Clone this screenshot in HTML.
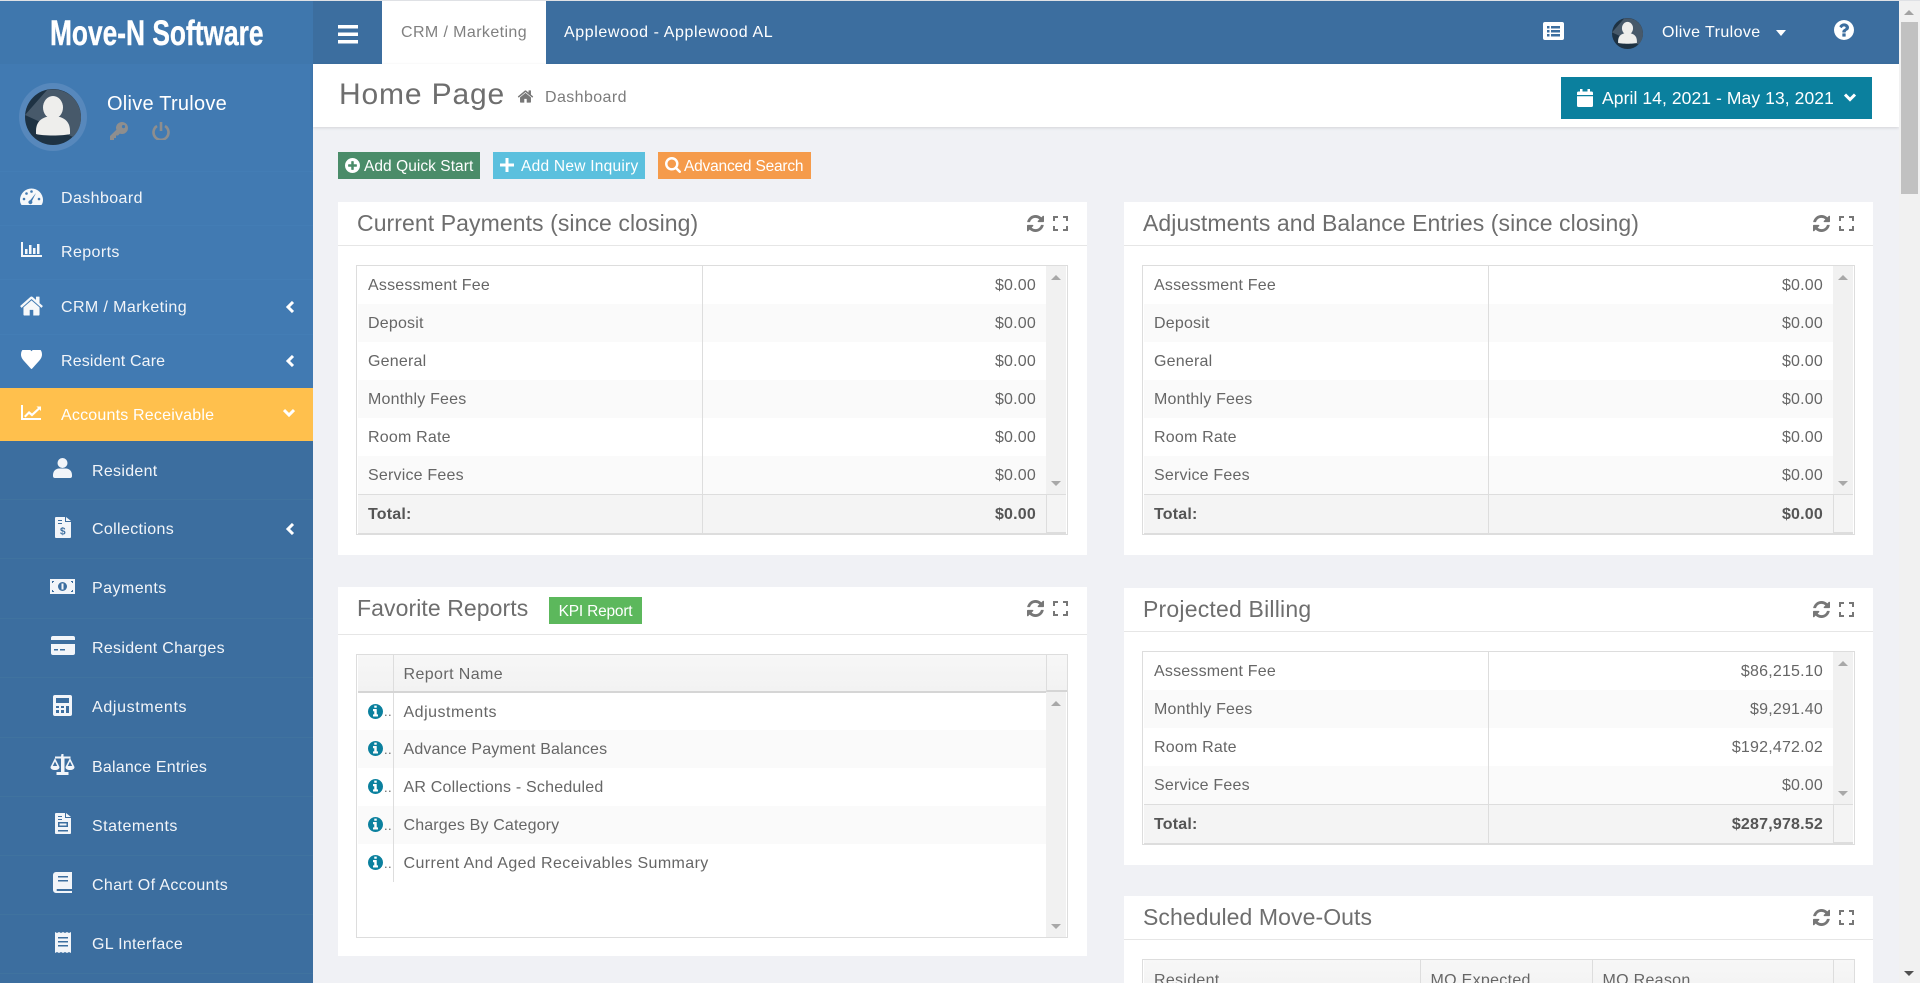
<!DOCTYPE html>
<html lang="en"><head><meta charset="utf-8"><title>Home Page</title>
<style>
*{box-sizing:border-box}
html,body{margin:0;padding:0;width:1920px;height:983px;overflow:hidden;background:#f0f1f5;font-family:"Liberation Sans",Arial,sans-serif;font-size:16px;color:#666}
#root{position:absolute;left:0;top:0;width:1920px;height:983px;overflow:hidden}
svg{display:block;position:absolute;fill:currentColor}
.a{position:absolute;white-space:nowrap}
#strip{position:absolute;left:0;top:0;width:1920px;height:1px;background:#dfe1e5;z-index:5}
#side{position:absolute;left:0;top:0;width:313px;height:983px;background:#417ab2;color:#f2f5f9;overflow:hidden}
#logo{position:absolute;left:0;top:0;width:313px;height:64px;background:#3f77ad}
#logo span{position:absolute;left:50px;top:14px;font-weight:700;font-size:35px;line-height:40px;color:#fff;transform-origin:0 50%;transform:scaleX(.752);white-space:nowrap;-webkit-text-stroke:.4px #fff}
#side ul{list-style:none;margin:0;padding:0;position:absolute;left:0;top:171px;width:313px}
#side li{position:relative;white-space:nowrap;border-top:1px solid #437db5;padding-left:61px}
#side li.s{background:#3c6e9f;border-top:1px solid #40739f;padding-left:92px}
#side li.act{background:#ffc04d;border-top:0;color:#fff}
.chev{left:285px;width:10px;height:12px;fill:none;stroke:#fff;stroke-width:3}
#top{position:absolute;left:313px;top:0;width:1586px;height:64px;background:#3c6e9f;color:#fff}
#band{position:absolute;left:313px;top:64px;width:1586px;height:63px;background:#fff;box-shadow:0 1px 3px rgba(0,0,0,.12)}
#sb{position:absolute;left:1899px;top:0;width:21px;height:983px;background:#f1f1f1}
.btn{position:absolute;top:152px;height:27px;color:#fff;font-size:15.5px;line-height:29px;white-space:nowrap}
.panel{position:absolute;background:#fff;overflow:hidden}
.panel h3{position:absolute;left:19px;margin:0;font-weight:400;font-size:23px;line-height:30px;letter-spacing:.08px;color:#6e6e6e;white-space:nowrap}
.hr{position:absolute;left:0;right:0;height:1px;background:#e6e6e6}
.ic{color:#777}
.tw{position:absolute;border:1px solid #ddd;background:#fff;overflow:hidden}
.tw table{position:absolute;left:1px;top:0;width:688px;border-collapse:collapse;table-layout:fixed;letter-spacing:.2px}
.tw td,.tw th{height:38px;padding:2px 10px 0;font-weight:400;white-space:nowrap;overflow:hidden}
.tw td.r{text-align:right}
.tw tr:nth-child(even) td{background:#fafafa}
.tw td.c1{border-right:1px solid #ddd}
.tw tr.f td{height:40px;background:#f4f4f4!important;font-weight:700;border-top:1px solid #ddd;border-bottom:2px solid #ddd;color:#555}
.tw table.fav tr:nth-child(even) td{background:#fff}
.tw table.fav tr:nth-child(odd):not(.hd) td{background:#fafafa}
.sc{position:absolute;left:689px;width:20px;background:#f1f1f1}
.sc:before,.sc:after{content:"";position:absolute;left:5px;border-left:5px solid transparent;border-right:5px solid transparent}
.sc:before{top:9px;border-bottom:5px solid #a8a8a8}
.sc:after{bottom:8px;border-top:5px solid #a8a8a8}
.fs{position:absolute;left:689px;width:20px;background:#f4f4f4;border-left:1px solid #ddd;border-top:1px solid #ddd;border-bottom:2px solid #ddd}
.hd td,.hd th{background:linear-gradient(#f7f7f7,#f2f2f2);padding-top:3px}
</style></head><body>
<div id="root">
<svg width="0" height="0" style="position:absolute"><defs>
<symbol id="home" viewBox="0 0 1792 1792"><path d="M1472 992v480q0 26-19 45t-45 19h-384v-384h-256v384h-384q-26 0-45-19t-19-45v-480q0-1 .5-3t.5-3l575-474 575 474q1 2 1 6zm223-69l-62 74q-8 9-21 11h-3q-13 0-21-7l-692-577-692 577q-12 8-24 7-13-2-21-11l-62-74q-8-10-7-23.5t11-21.5l719-599q32-26 76-26t76 26l244 204v-195q0-14 9-23t23-9h192q14 0 23 9t9 23v408l219 182q10 8 11 21.5t-7 23.5z"/></symbol>
<symbol id="refresh" viewBox="128 128 1536 1536"><path d="M1639 1056q0 5-1 7-64 268-268 434.5t-478 166.5q-146 0-282.5-55t-243.5-157l-129 129q-19 19-45 19t-45-19-19-45v-448q0-26 19-45t45-19h448q26 0 45 19t19 45-19 45l-137 137q71 66 161 102t187 36q134 0 250-65t186-179q11-17 53-117 8-23 30-23h192q13 0 22.5 9.5t9.5 22.5zm25-800v448q0 26-19 45t-45 19h-448q-26 0-45-19t-19-45 19-45l138-138q-148-137-349-137-134 0-250 65t-186 179q-11 17-53 117-8 23-30 23h-199q-13 0-22.5-9.5t-9.5-22.5v-7q65-268 270-434.5t480-166.5q146 0 284 55.5t245 156.5l130-129q19-19 45-19t45 19 19 45z"/></symbol>
<symbol id="expand" viewBox="0 0 15 15"><path d="M0 0h5v2H2v3H0zM10 0h5v5h-2V2h-3zM0 10h2v3h3v2H0zM13 10h2v5h-5v-2h3z"/></symbol>
<symbol id="info" viewBox="128 128 1536 1536"><path d="M1152 1376v-160q0-14-9-23t-23-9h-96v-512q0-14-9-23t-23-9h-320q-14 0-23 9t-9 23v160q0 14 9 23t23 9h96v320h-96q-14 0-23 9t-9 23v160q0 14 9 23t23 9h448q14 0 23-9t9-23zm-128-896v-160q0-14-9-23t-23-9h-192q-14 0-23 9t-9 23v160q0 14 9 23t23 9h192q14 0 23-9t9-23zm640 416q0 209-103 385.5t-279.5 279.5-385.5 103-385.5-103-279.5-279.5-103-385.5 103-385.5 279.5-279.5 385.5-103 385.5 103 279.5 279.5 103 385.5z"/></symbol>
<symbol id="avatar" viewBox="0 0 56 56"><circle cx="28" cy="28" r="28" fill="#1e3243"/><path d="M0 26 L22 1 A28 28 0 0 1 56 28 A28 28 0 0 1 48 48z" fill="#47596a"/><path d="M11 42c0-8 4-12 10-14h14c6 2 10 6 10 14v3c-6 2-28 2-34 0z" fill="#eeeeec"/><ellipse cx="28" cy="18.5" rx="10" ry="11.5" fill="#eeeeec"/></symbol>
</defs></svg>

<div id="strip"></div>

<aside id="side">
<div id="logo"><span>Move-N Software</span></div>
<svg style="left:19px;top:83px;width:68px;height:68px" viewBox="0 0 68 68"><circle cx="34" cy="34" r="34" fill="#5788bc"/></svg>
<svg style="left:25px;top:89px;width:56px;height:56px"><use href="#avatar"/></svg>
<div class="a" style="left:107px;top:92px;font-size:20px;line-height:24px;letter-spacing:.25px;color:#fff">Olive Trulove</div>
<svg style="left:110px;top:122px;width:18px;height:18px;color:#8e8e8e" viewBox="0 0 18 18"><path d="M12 0a6 6 0 0 1 0 12c-.8 0-1.500-.2-2.200-.4L8 13.500H6V16H4v2H0v-4l6.400-6.200C6.200 7.200 6 6.600 6 6a6 6 0 0 1 6-6zm1.500 3a1.600 1.600 0 1 0 0 3.200 1.600 1.600 0 0 0 0-3.200z" fill-rule="evenodd"/></svg>
<svg style="left:152px;top:122px;width:18px;height:18px;color:#8e8e8e;fill:none;stroke:currentColor;stroke-width:2.600" viewBox="0 0 18 18"><path d="M5 4a7.500 7.500 0 1 0 8 0M9 0v9"/></svg>
<ul>
<li style="height:54px;line-height:54px;letter-spacing:.4px"><svg style="left:20px;top:16px;width:23px;height:17px;color:#f6f8fa" viewBox="0 0 23 17"><path d="M0 12A11.500 11.500 0 0 1 23 12c0 2-.5 3.500-1.500 5h-20C.5 15.500 0 14 0 12z"/><g fill="#417ab2"><circle cx="4" cy="11" r="1.300"/><circle cx="6.500" cy="5.500" r="1.300"/><circle cx="11.500" cy="3.500" r="1.300"/><circle cx="19" cy="11" r="1.300"/><path d="M16 5l-4 8a2 2 0 1 1-1.800-.8z"/></g></svg>Dashboard</li>
<li style="height:54px;line-height:54px;letter-spacing:.4px"><svg style="left:21px;top:16px;width:21px;height:15px;color:#f6f8fa" viewBox="0 0 21 15"><path d="M0 0h2v13h19v2H0zM4 7h2.500v5H4zM8 3h2.500v9H8zM12 6h2.500v6H12zM16 2h2.500v10H16z"/></svg>Reports</li>
<li style="height:55px;line-height:55px;letter-spacing:.4px"><svg style="left:19px;top:15px;width:25px;height:21px;color:#f6f8fa" viewBox="0 150 1792 1420" preserveAspectRatio="none"><use href="#home" width="1792" height="1792"/></svg>CRM / Marketing<svg class="chev" style="top:21px" viewBox="0 0 10 12"><path d="M8 1L3 6l5 5"/></svg></li>
<li style="height:54px;line-height:54px;letter-spacing:.15px"><svg style="left:21px;top:15px;width:21px;height:19px;color:#fff" viewBox="0 256 1792 1408" preserveAspectRatio="none"><path d="M896 1664q-26 0-44-18l-624-602q-10-8-27.500-26t-55.500-65.500-68-97.500-53.500-121-23.500-138q0-220 127-344t351-124q62 0 126.500 21.500t120 58 95.500 68.500 76 68q36-36 76-68t95.500-68.500 120-58 126.500-21.500q224 0 351 124t127 344q0 221-229 450l-623 600q-18 18-44 18z"/></svg>Resident Care<svg class="chev" style="top:20px" viewBox="0 0 10 12"><path d="M8 1L3 6l5 5"/></svg></li>
<li class="act" style="height:53px;line-height:55px;letter-spacing:.2px"><svg style="left:21px;top:17px;width:20px;height:15px;color:#fff" viewBox="0 0 20 15"><path d="M0 0h2v13h18v2H0z"/><path d="M3 11l5-5 3 2.500L17 3l-1.500-1.500H20V6l-1.500-1.500L11 11.500 8 9l-3.500 3.500z"/></svg>Accounts Receivable<svg class="chev" style="top:20px;left:283px;width:12px;height:10px" viewBox="0 0 12 10"><path d="M1 2l5 5 5-5"/></svg></li>
<li class="s" style="height:58px;line-height:61px;letter-spacing:.3px;border-top:0"><svg style="left:53px;top:17px;width:19px;height:20px" viewBox="0 0 19 20"><circle cx="9.500" cy="5" r="5"/><path d="M0 17c0-4 3-6.500 6-6.500h7c3 0 6 2.500 6 6.500v1a2 2 0 0 1-2 2H2a2 2 0 0 1-2-2z"/></svg>Resident</li>
<li class="s" style="height:59px;line-height:60px;letter-spacing:.35px"><svg style="left:55px;top:17px;width:16px;height:21px" viewBox="0 0 16 21"><path d="M1 0h9v5h6v15a1 1 0 0 1-1 1H1a1 1 0 0 1-1-1V1a1 1 0 0 1 1-1zM11 0l5 4h-5z"/><path d="M3 3h4v1H3zM3 6h4v1H3z" fill="#3c6e9f"/><text x="8" y="17.500" font-size="10" font-weight="700" text-anchor="middle" fill="#3c6e9f">$</text></svg>Collections<svg class="chev" style="top:23px" viewBox="0 0 10 12"><path d="M8 1L3 6l5 5"/></svg></li>
<li class="s" style="height:60px;line-height:60px;letter-spacing:.45px"><svg style="left:50px;top:20px;width:25px;height:15px" viewBox="0 0 25 15"><path d="M0 0h25v15H0z"/><circle cx="12.500" cy="7.500" r="4.500" fill="#3c6e9f"/><path d="M11.500 4.500h2v6h-2z" fill="#f4f6f9"/><path d="M2 2h2v1H3v1H2zM21 2h2v2h-1V3h-1zM2 11h1v1h1v1H2zM22 11h1v2h-2v-1h1z" fill="#3c6e9f"/></svg>Payments</li>
<li class="s" style="height:59px;line-height:59px;letter-spacing:.3px"><svg style="left:51px;top:17px;width:24px;height:19px" viewBox="0 0 24 19"><path d="M2 0h20a2 2 0 0 1 2 2v2H0V2a2 2 0 0 1 2-2zM0 8h24v9a2 2 0 0 1-2 2H2a2 2 0 0 1-2-2z"/><path d="M3 13h4v1.500H3zM9 13h5v1.500H9z" fill="#3c6e9f"/></svg>Resident Charges</li>
<li class="s" style="height:60px;line-height:60px;letter-spacing:.65px"><svg style="left:53px;top:17px;width:19px;height:21px" viewBox="0 0 19 21"><path d="M2 0h15a2 2 0 0 1 2 2v17a2 2 0 0 1-2 2H2a2 2 0 0 1-2-2V2a2 2 0 0 1 2-2z"/><path d="M3 3h13v5H3zM3 11h3v2H3zM8 11h3v2H8zM13 11h3v7h-3zM3 15h3v3H3zM8 15h3v3H8z" fill="#3c6e9f"/></svg>Adjustments</li>
<li class="s" style="height:59px;line-height:59px;letter-spacing:.2px"><svg style="left:50px;top:16px;width:25px;height:21px" viewBox="0 0 25 21"><path d="M11.500 0h2v2.500h7v2h-6V18h4v3H6.500v-3h4.500V4.500h-6v-2h6z"/><path d="M5 4l4.500 9c0 2-2 3-4.500 3s-4.500-1-4.500-3zm0 3.500L2.800 12h4.400zM20 4l4.500 9c0 2-2 3-4.500 3s-4.500-1-4.500-3zm0 3.500L17.800 12h4.400z" fill-rule="evenodd"/></svg>Balance Entries</li>
<li class="s" style="height:59px;line-height:60px;letter-spacing:.5px"><svg style="left:55px;top:16px;width:16px;height:21px" viewBox="0 0 16 21"><path d="M1 0h9v5h6v15a1 1 0 0 1-1 1H1a1 1 0 0 1-1-1V1a1 1 0 0 1 1-1zM11 0l5 4h-5z"/><path d="M3 3h4v1H3zM3 6h4v1H3zM3 9h10v5H3zM3 17h10v1.500H3z" fill="#3c6e9f"/><path d="M4.500 10.500h7v2h-7z"/></svg>Statements</li>
<li class="s" style="height:59px;line-height:60px;letter-spacing:.37px"><svg style="left:53px;top:16px;width:19px;height:21px" viewBox="0 0 19 21"><path d="M3 0h16v17H4a1.500 1.500 0 0 0 0 2h15v2H3a3 3 0 0 1-3-3V3a3 3 0 0 1 3-3z"/><path d="M5 4h10v1.500H5zM5 8h10v1.500H5z" fill="#3c6e9f"/></svg>Chart Of Accounts</li>
<li class="s" style="height:59px;line-height:60px;letter-spacing:.3px"><svg style="left:55px;top:17px;width:16px;height:21px" viewBox="0 0 16 21"><path d="M0 0l2 1 2-1 2 1 2-1 2 1 2-1 2 1 2-1v21l-2-1-2 1-2-1-2 1-2-1-2 1-2-1-2 1z"/><path d="M3 5h10v1.500H3zM3 9h10v1.500H3zM3 13h10v1.500H3z" fill="#3c6e9f"/></svg>GL Interface</li>
<li class="s" style="height:30px"></li>
</ul>
</aside>

<header id="top">
<svg style="left:25px;top:25px;width:20px;height:19px;color:#fff" viewBox="0 0 20 19"><path d="M0 0h20v3.500H0zM0 7.500h20V11H0zM0 15h20v3.500H0z"/></svg>
<div class="a" style="left:69px;top:1px;width:164px;height:63px;background:#fff;color:#808080;line-height:64px;padding-left:19px;letter-spacing:.4px">CRM / Marketing</div>
<div class="a" style="left:251px;top:1px;line-height:64px;letter-spacing:.6px">Applewood - Applewood AL</div>
<svg style="left:1230px;top:22px;width:21px;height:18px;color:#fff" viewBox="0 0 21 18"><path d="M2 0h17a2 2 0 0 1 2 2v14a2 2 0 0 1-2 2H2a2 2 0 0 1-2-2V2a2 2 0 0 1 2-2z"/><path d="M4 4h2.500v2.500H4zM8 4h9v2.500H8zM4 8h2.500v2.500H4zM8 8h9v2.500H8zM4 12h2.500v2.500H4zM8 12h9v2.500H8z" fill="#3c6e9f"/></svg>
<svg style="left:1299px;top:18px;width:31px;height:31px"><use href="#avatar"/></svg>
<div class="a" style="left:1349px;top:1px;line-height:64px;letter-spacing:.4px">Olive Trulove</div>
<svg style="left:1463px;top:30px;width:10px;height:6px;color:#fff" viewBox="0 0 10 6"><path d="M0 0h10L5 6z"/></svg>
<svg style="left:1521px;top:20px;width:20px;height:20px;color:#fff" viewBox="128 128 1536 1536"><path d="M1024 1376v-192q0-14-9-23t-23-9h-192q-14 0-23 9t-9 23v192q0 14 9 23t23 9h192q14 0 23-9t9-23zm256-672q0-88-55.500-163t-138.500-116-170-41q-243 0-371 213-15 24 8 42l132 100q7 6 19 6 16 0 25-12 53-68 86-92 34-24 86-24 48 0 85.500 26t37.500 59q0 38-20 61t-68 45q-63 28-115.500 86.500t-52.500 125.500v36q0 14 9 23t23 9h192q14 0 23-9t9-23q0-19 21.500-49.500t54.500-49.500q32-18 49-28.500t46-35 44.500-48 28-60.500 12.500-81zm384 192q0 209-103 385.500t-279.500 279.500-385.500 103-385.500-103-279.500-279.500-103-385.500 103-385.500 279.500-279.500 385.500-103 385.500 103 279.500 279.500 103 385.500z"/></svg>
</header>

<div id="band">
<div class="a" style="left:26px;top:12px;font-size:30px;line-height:38px;letter-spacing:.85px;color:#6e6e6e">Home Page</div>
<svg style="left:204px;top:24px;width:17px;height:17px;color:#777"><use href="#home"/></svg>
<div class="a" style="left:232px;top:22px;line-height:24px;letter-spacing:.4px;color:#7c7c7c">Dashboard</div>
<div class="a" style="left:1248px;top:13px;width:311px;height:42px;background:#0b809e"></div>
<svg style="left:1264px;top:25px;width:16px;height:18px;color:#fff" viewBox="0 0 16 18"><path d="M3 0h2.500v2.500h5V0H13v2.500h1.500A1.500 1.500 0 0 1 16 4v2H0V4a1.500 1.500 0 0 1 1.500-1.500H3zM0 7.200h16v9.300a1.500 1.500 0 0 1-1.500 1.500h-13A1.500 1.500 0 0 1 0 16.500z"/></svg>
<div class="a" style="left:1289px;top:13px;line-height:42px;font-size:17.5px;letter-spacing:.08px;color:#fff">April 14, 2021 - May 13, 2021</div>
<svg style="left:1531px;top:29px;width:12px;height:9px;fill:none;stroke:#fff;stroke-width:3" viewBox="0 0 12 9"><path d="M1 1.500l5 5 5-5"/></svg>
</div>

<div class="btn" style="left:338px;width:142px;background:#4a8c69;padding-left:26px;letter-spacing:.05px"><svg style="left:7px;top:6px;width:15px;height:15px;color:#fff" viewBox="128 128 1536 1536"><path d="M1344 960v-128q0-26-19-45t-45-19h-256v-256q0-26-19-45t-45-19h-128q-26 0-45 19t-19 45v256h-256q-26 0-45 19t-19 45v128q0 26 19 45t45 19h256v256q0 26 19 45t45 19h128q26 0 45-19t19-45v-256h256q26 0 45-19t19-45zm320-64q0 209-103 385.500t-279.500 279.500-385.500 103-385.500-103-279.500-279.500-103-385.500 103-385.500 279.500-279.500 385.500-103 385.500 103 279.500 279.500 103 385.500z"/></svg>Add Quick Start</div>
<div class="btn" style="left:493px;width:152px;background:#5bc0de;padding-left:28px;letter-spacing:.25px"><svg style="left:7px;top:6px;width:14px;height:14px;color:#fff" viewBox="0 0 14 14"><path d="M5.500 0h3v5.500H14v3H8.500V14h-3V8.500H0v-3h5.500z"/></svg>Add New Inquiry</div>
<div class="btn" style="left:658px;width:153px;background:#f59b4b;padding-left:26px;letter-spacing:-.2px"><svg style="left:7px;top:5px;width:16px;height:16px;color:#fff" viewBox="64 128 1664 1664"><path d="M1216 832q0-185-131.500-316.500t-316.500-131.500-316.500 131.500-131.500 316.500 131.500 316.500 316.500 131.500 316.500-131.500 131.500-316.500zm512 832q0 52-38 90t-90 38q-54 0-90-38l-343-342q-179 124-399 124-143 0-273.500-55.500t-225-150-150-225-55.500-273.500 55.500-273.500 150-225 225-150 273.500-55.500 273.500 55.500 225 150 150 225 55.500 273.500q0 220-124 399l343 343q37 37 37 90z"/></svg>Advanced Search</div>

<section class="panel" style="left:338px;top:202px;width:749px;height:353px">
<h3 style="top:6px">Current Payments (since closing)</h3>
<svg class="ic" style="left:689px;top:13px;width:17px;height:17px"><use href="#refresh"/></svg>
<svg class="ic" style="left:715px;top:14px;width:15px;height:15px"><use href="#expand"/></svg>
<div class="hr" style="top:43px"></div>
<div class="tw" style="left:18px;top:63px;width:712px;height:270px">
<table><colgroup><col style="width:344px"><col style="width:344px"></colgroup>
<tr><td class="c1">Assessment Fee</td><td class="r">$0.00</td></tr>
<tr><td class="c1">Deposit</td><td class="r">$0.00</td></tr>
<tr><td class="c1">General</td><td class="r">$0.00</td></tr>
<tr><td class="c1">Monthly Fees</td><td class="r">$0.00</td></tr>
<tr><td class="c1">Room Rate</td><td class="r">$0.00</td></tr>
<tr><td class="c1">Service Fees</td><td class="r">$0.00</td></tr>
<tr class="f"><td class="c1">Total:</td><td class="r">$0.00</td></tr>
</table>
<div class="sc" style="top:0;height:228px"></div><div class="fs" style="top:228px;height:40px"></div>
</div>
</section>

<section class="panel" style="left:1124px;top:202px;width:749px;height:353px">
<h3 style="top:6px">Adjustments and Balance Entries (since closing)</h3>
<svg class="ic" style="left:689px;top:13px;width:17px;height:17px"><use href="#refresh"/></svg>
<svg class="ic" style="left:715px;top:14px;width:15px;height:15px"><use href="#expand"/></svg>
<div class="hr" style="top:43px"></div>
<div class="tw" style="left:18px;top:63px;width:713px;height:270px">
<table><colgroup><col style="width:344px"><col style="width:345px"></colgroup>
<tr><td class="c1">Assessment Fee</td><td class="r">$0.00</td></tr>
<tr><td class="c1">Deposit</td><td class="r">$0.00</td></tr>
<tr><td class="c1">General</td><td class="r">$0.00</td></tr>
<tr><td class="c1">Monthly Fees</td><td class="r">$0.00</td></tr>
<tr><td class="c1">Room Rate</td><td class="r">$0.00</td></tr>
<tr><td class="c1">Service Fees</td><td class="r">$0.00</td></tr>
<tr class="f"><td class="c1">Total:</td><td class="r">$0.00</td></tr>
</table>
<div class="sc" style="top:0;height:228px;left:690px"></div><div class="fs" style="top:228px;height:40px;left:690px"></div>
</div>
</section>

<section class="panel" style="left:338px;top:587px;width:749px;height:369px">
<h3 style="top:6px">Favorite Reports</h3>
<div class="a" style="left:211px;top:10px;width:93px;height:27px;background:#5cb85c;color:#fff;font-size:15.5px;line-height:30px;text-align:center;letter-spacing:-.2px">KPI Report</div>
<svg class="ic" style="left:689px;top:13px;width:17px;height:17px"><use href="#refresh"/></svg>
<svg class="ic" style="left:715px;top:14px;width:15px;height:15px"><use href="#expand"/></svg>
<div class="hr" style="top:47px"></div>
<div class="tw" style="left:18px;top:67px;width:712px;height:284px">
<table class="fav" style="letter-spacing:.4px"><colgroup><col style="width:35px"><col style="width:653px"></colgroup>
<tr class="hd"><th class="c1" style="height:37px;border-right:1px solid #ddd;border-bottom:2px solid #d5d5d5"></th><th style="height:37px;text-align:left;border-bottom:2px solid #d5d5d5">Report Name</th></tr>
<tr><td class="c1" style="padding:0 0 0 26px;font-size:13px;position:relative"><svg style="left:10px;top:11px;width:15px;height:15px;color:#0b809e"><use href="#info"/></svg>..</td><td style="letter-spacing:.5px">Adjustments</td></tr>
<tr><td class="c1" style="padding:0 0 0 26px;font-size:13px;position:relative"><svg style="left:10px;top:11px;width:15px;height:15px;color:#0b809e"><use href="#info"/></svg>..</td><td style="letter-spacing:.15px">Advance Payment Balances</td></tr>
<tr><td class="c1" style="padding:0 0 0 26px;font-size:13px;position:relative"><svg style="left:10px;top:11px;width:15px;height:15px;color:#0b809e"><use href="#info"/></svg>..</td><td style="letter-spacing:.2px">AR Collections - Scheduled</td></tr>
<tr><td class="c1" style="padding:0 0 0 26px;font-size:13px;position:relative"><svg style="left:10px;top:11px;width:15px;height:15px;color:#0b809e"><use href="#info"/></svg>..</td><td style="letter-spacing:.15px">Charges By Category</td></tr>
<tr><td class="c1" style="padding:0 0 0 26px;font-size:13px;position:relative"><svg style="left:10px;top:11px;width:15px;height:15px;color:#0b809e"><use href="#info"/></svg>..</td><td style="letter-spacing:.4px">Current And Aged Receivables Summary</td></tr>
</table>
<div style="position:absolute;left:689px;top:0;width:21px;height:37px;background:linear-gradient(#f7f7f7,#f2f2f2);border-left:1px solid #ddd;border-bottom:2px solid #d5d5d5"></div>
<div class="sc" style="top:37px;height:245px"></div>
</div>
</section>

<section class="panel" style="left:1124px;top:588px;width:749px;height:277px">
<h3 style="top:6px;letter-spacing:.2px">Projected Billing</h3>
<svg class="ic" style="left:689px;top:13px;width:17px;height:17px"><use href="#refresh"/></svg>
<svg class="ic" style="left:715px;top:14px;width:15px;height:15px"><use href="#expand"/></svg>
<div class="hr" style="top:43px"></div>
<div class="tw" style="left:18px;top:63px;width:713px;height:194px">
<table><colgroup><col style="width:344px"><col style="width:345px"></colgroup>
<tr><td class="c1">Assessment Fee</td><td class="r">$86,215.10</td></tr>
<tr><td class="c1">Monthly Fees</td><td class="r">$9,291.40</td></tr>
<tr><td class="c1">Room Rate</td><td class="r">$192,472.02</td></tr>
<tr><td class="c1">Service Fees</td><td class="r">$0.00</td></tr>
<tr class="f"><td class="c1">Total:</td><td class="r">$287,978.52</td></tr>
</table>
<div class="sc" style="top:0;height:152px;left:690px"></div><div class="fs" style="top:152px;height:40px;left:690px"></div>
</div>
</section>

<section class="panel" style="left:1124px;top:896px;width:749px;height:87px">
<h3 style="top:6px">Scheduled Move-Outs</h3>
<svg class="ic" style="left:689px;top:13px;width:17px;height:17px"><use href="#refresh"/></svg>
<svg class="ic" style="left:715px;top:14px;width:15px;height:15px"><use href="#expand"/></svg>
<div class="hr" style="top:43px"></div>
<div class="tw" style="left:18px;top:63px;width:713px;height:60px">
<table style="letter-spacing:.3px;width:689px"><colgroup><col style="width:276px"><col style="width:172px"><col style="width:241px"></colgroup>
<tr class="hd"><th style="text-align:left;border-right:1px solid #ddd">Resident</th><th style="text-align:left;border-right:1px solid #ddd">MO Expected</th><th style="text-align:left">MO Reason</th></tr>
</table>
<div style="position:absolute;left:690px;top:0;width:21px;height:38px;background:linear-gradient(#f7f7f7,#f2f2f2);border-left:1px solid #ddd"></div>
</div>
</section>

<div id="sb">
<svg style="left:5px;top:10px;width:10px;height:5px;color:#a3a3a3" viewBox="0 0 10 5"><path d="M5 0l5 5H0z"/></svg>
<div style="position:absolute;left:2px;top:22px;width:17px;height:172px;background:#c1c1c1"></div>
<svg style="left:5px;top:971px;width:10px;height:5px;color:#505050" viewBox="0 0 10 5"><path d="M0 0h10L5 5z"/></svg>
</div>
</div>
</body></html>
